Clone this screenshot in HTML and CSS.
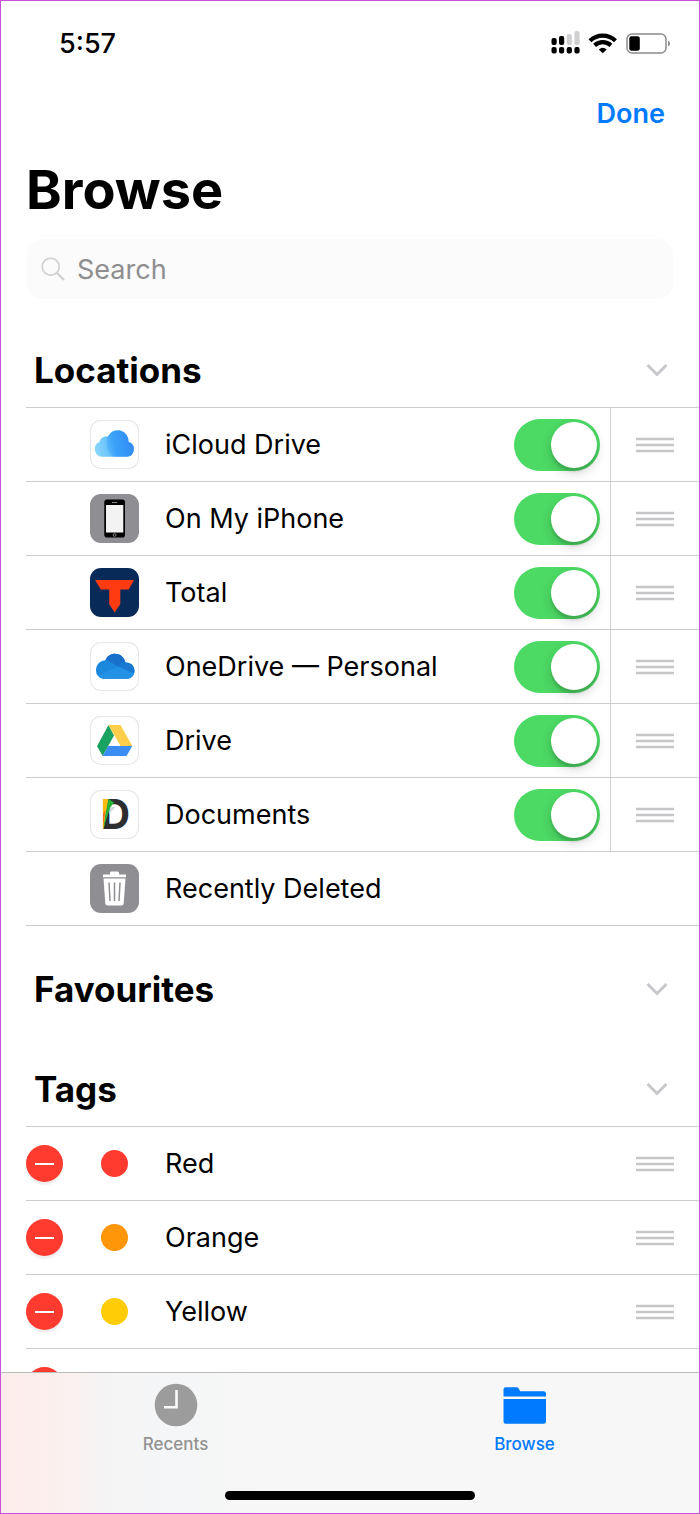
FILE: index.html
```html
<!DOCTYPE html>
<html lang="en">
<head>
<meta charset="utf-8">
<meta name="viewport" content="width=device-width, initial-scale=1">
<title>Browse</title>
<link rel="stylesheet" href="styles.css">
</head>
<body>
<svg class="defs" aria-hidden="true">
  <defs>
    <symbol id="chevron" viewBox="0 0 22 14"><path d="M1.5 2 11 11.5 20.5 2" fill="none" stroke="#c7c7cc" stroke-width="3"/></symbol>
    <symbol id="grip" viewBox="0 0 38 16"><path d="M0 2H38M0 8H38M0 14H38" stroke="#c6c6c8" stroke-width="2.4"/></symbol>
    <linearGradient id="sky" gradientUnits="userSpaceOnUse" x1="5" y1="30" x2="45" y2="22">
      <stop offset="0" stop-color="#8ad6fb"/><stop offset=".3" stop-color="#6cc6fb"/><stop offset=".5" stop-color="#42abfb"/><stop offset="1" stop-color="#3388f2"/>
    </linearGradient>
  </defs>
</svg>
<div class="screen">
  <main class="content">
    <header class="status">
      <time class="clock">5:57</time>
      <svg class="status-icons" viewBox="0 0 120 24" role="img" aria-label="Signal, Wi-Fi, battery">
        <g fill="#000">
          <rect x="1.5" y="16" width="5.2" height="6.4" rx="2"/><rect x="9" y="16" width="5.2" height="6.4" rx="2"/><rect x="16.7" y="16" width="5.2" height="6.4" rx="2"/><rect x="24.4" y="16" width="5.2" height="6.4" rx="2"/>
          <rect x="1.5" y="7" width="5.2" height="7" rx="2"/><rect x="9" y="5" width="5.2" height="9" rx="2"/>
        </g>
        <rect x="16.7" y="3" width="5.2" height="11" rx="2" fill="#d0d0d2"/><rect x="24.4" y="0" width="5.2" height="14" rx="2" fill="#d0d0d2"/>
        <g fill="none" stroke="#000" stroke-width="4.2"><path d="M40 9.800A18.500 18.500 0 0 1 65.500 9.800"/><path d="M44.600 14.400A12 12 0 0 1 60.900 14.400"/></g>
        <path d="M48.800 18.400Q52.750 15.300 56.700 18.400L52.750 22.300Z"/>
        <rect x="77" y="3" width="39" height="19" rx="5" fill="none" stroke="#8c8c8c" stroke-width="1.500"/>
        <rect x="79.300" y="5.200" width="10.500" height="14.600" rx="2.200"/>
        <path d="M118 9.500Q120 10.500 120 12.500T118 15.500Z" fill="#8c8c8c"/>
      </svg>
    </header>
    <nav class="actions"><button class="done" type="button">Done</button></nav>
    <h1 class="title">Browse</h1>
    <label class="search">
      <svg class="search-icon" viewBox="0 0 24 24" aria-hidden="true"><circle cx="9.700" cy="9.700" r="8.500" fill="none" stroke="#d0d0d2" stroke-width="1.700"/><path d="m16 16 7 7" stroke="#d0d0d2" stroke-width="2.400"/></svg>
      <input class="search-input" type="search" placeholder="Search" aria-label="Search">
    </label>

    <section class="group">
      <div class="group-head"><h2 class="group-title">Locations</h2><button class="fold" type="button" aria-label="Collapse Locations"><svg viewBox="0 0 22 14"><use href="#chevron"/></svg></button></div>
      <ul class="list">
        <li class="row">
          <svg class="app light" viewBox="0 0 49 49" aria-hidden="true"><g fill="url(#sky)"><path d="M12 36.700A7.800 7.800 0 0 1 9.500 21.800 6.800 6.800 0 0 1 17.800 16.600 10.900 10.900 0 0 1 38.600 21.800 7.700 7.700 0 0 1 37.500 36.700Z"/></g><path d="M17.800 16.600A10.900 10.900 0 0 1 38.600 21.800 7.700 7.700 0 0 1 37.500 36.700H24C17 32 15 24 17.800 16.600Z" fill="#2586f7" opacity=".25"/></svg>
          <label class="name" for="s1">iCloud Drive</label><input class="switch" id="s1" type="checkbox" role="switch" checked>
          <button class="handle" type="button" aria-label="Reorder iCloud Drive"><svg viewBox="0 0 38 16"><use href="#grip"/></svg></button>
        </li>
        <li class="row">
          <svg class="app grey" viewBox="0 0 49 49" aria-hidden="true"><rect x="14.300" y="5.500" width="20.700" height="38" rx="2.800"/><rect x="16" y="11" width="17.300" height="27.500" fill="#f3f3f3"/><path d="M22 8.500h5" stroke="#888" stroke-width="1"/><circle cx="24.600" cy="41" r="1.400" fill="none" stroke="#999" stroke-width=".8"/></svg>
          <label class="name" for="s2">On My iPhone</label><input class="switch" id="s2" type="checkbox" role="switch" checked>
          <button class="handle" type="button" aria-label="Reorder On My iPhone"><svg viewBox="0 0 38 16"><use href="#grip"/></svg></button>
        </li>
        <li class="row">
          <svg class="app navy" viewBox="0 0 49 49" aria-hidden="true"><path d="M5 12H44L38.700 21.500H30.300V36L24.700 44.500 19.200 36V21.500H10.800Z" fill="#ff3b12"/></svg>
          <label class="name" for="s3">Total</label><input class="switch" id="s3" type="checkbox" role="switch" checked>
          <button class="handle" type="button" aria-label="Reorder Total"><svg viewBox="0 0 38 16"><use href="#grip"/></svg></button>
        </li>
        <li class="row">
          <svg class="app light" viewBox="0 0 49 49" aria-hidden="true"><path d="M13.500 36.700A8 8 0 0 1 6 28.500C6 23 10 18.500 15.500 18.300 17 14 20.500 11.700 25 11.700 30 11.700 34 15 35.500 20.500 41 20.500 44.500 24 44.500 28.700 44.500 33.500 41 36.700 37 36.700Z" fill="#1b87dd"/><path d="M15.500 18.300C17 14 20.500 11.700 25 11.700 30 11.700 34 15 35.500 20.500 32 20.500 29.500 22 28 24.500L21 20.200Q18.500 18.500 15.500 18.300Z" fill="#1970ca"/><path d="M35.500 20.500C42 20.500 45.800 26 44 31.500L28 24.500C29.500 22 32 20.500 35.500 20.500Z" fill="#1878d2"/><path d="M8 33.500 28 24.500 44 31.500C42.700 35 40 36.700 37 36.700H13.500Q10 36.700 8 33.500Z" fill="#2391e5"/></svg>
          <label class="name" for="s4">OneDrive — Personal</label><input class="switch" id="s4" type="checkbox" role="switch" checked>
          <button class="handle" type="button" aria-label="Reorder OneDrive"><svg viewBox="0 0 38 16"><use href="#grip"/></svg></button>
        </li>
        <li class="row">
          <svg class="app light" viewBox="0 0 49 49" aria-hidden="true"><path d="M18.500 9 24 19.500 12.700 40 7 30.300Z" fill="#1aa260"/><path d="M18.500 9H30.500L42.300 30H30.500Z" fill="#ffce4b"/><path d="M18 30H42.300L36.500 40H12.700Z" fill="#3b8cf3"/></svg>
          <label class="name" for="s5">Drive</label><input class="switch" id="s5" type="checkbox" role="switch" checked>
          <button class="handle" type="button" aria-label="Reorder Drive"><svg viewBox="0 0 38 16"><use href="#grip"/></svg></button>
        </li>
        <li class="row">
          <svg class="app light" viewBox="0 0 49 49" aria-hidden="true"><text class="mark" x="10.500" y="38.500">D</text><path d="M13 9H18.500L13.800 38.500H13Z" fill="#fcb813"/><path d="M18.500 9 24 12.500 20 18 13.400 38.500 15.500 24Z" fill="#27b235"/><path d="M13 24 15.500 20 13.300 36Z" fill="#f36b21"/><path d="m20.500 17 5.500-.5-7 7.500Z" fill="#d8d8d8"/></svg>
          <label class="name" for="s6">Documents</label><input class="switch" id="s6" type="checkbox" role="switch" checked>
          <button class="handle" type="button" aria-label="Reorder Documents"><svg viewBox="0 0 38 16"><use href="#grip"/></svg></button>
        </li>
        <li class="row">
          <svg class="app grey" viewBox="0 0 49 49" aria-hidden="true"><path d="M13 10.500H20V9Q20 7.500 21.500 7.500H27.500Q29 7.500 29 9V10.500H36V13.300H13Z" fill="#fff"/><path d="M13.500 14.500H35.500L33.700 39.500Q33.500 41.500 31.500 41.500H17.500Q15.500 41.500 15.300 39.500Z" fill="#fff"/><path d="m19 18.500 1 18.500M24.500 18.500V37M30 18.500 29 37" stroke="#8e8e93" stroke-width="1.500"/></svg>
          <span class="name">Recently Deleted</span>
        </li>
      </ul>
    </section>

    <section class="group">
      <div class="group-head"><h2 class="group-title">Favourites</h2><button class="fold" type="button" aria-label="Expand Favourites"><svg viewBox="0 0 22 14"><use href="#chevron"/></svg></button></div>
    </section>

    <section class="group">
      <div class="group-head"><h2 class="group-title">Tags</h2><button class="fold" type="button" aria-label="Collapse Tags"><svg viewBox="0 0 22 14"><use href="#chevron"/></svg></button></div>
      <ul class="list">
        <li class="row"><button class="remove" type="button" aria-label="Remove Red"></button><span class="dot red"></span><span class="name">Red</span><button class="handle plain" type="button" aria-label="Reorder Red"><svg viewBox="0 0 38 16"><use href="#grip"/></svg></button></li>
        <li class="row"><button class="remove" type="button" aria-label="Remove Orange"></button><span class="dot orange"></span><span class="name">Orange</span><button class="handle plain" type="button" aria-label="Reorder Orange"><svg viewBox="0 0 38 16"><use href="#grip"/></svg></button></li>
        <li class="row"><button class="remove" type="button" aria-label="Remove Yellow"></button><span class="dot yellow"></span><span class="name">Yellow</span><button class="handle plain" type="button" aria-label="Reorder Yellow"><svg viewBox="0 0 38 16"><use href="#grip"/></svg></button></li>
        <li class="row"><button class="remove" type="button" aria-label="Remove tag"></button><span class="dot green"></span></li>
      </ul>
    </section>
  </main>

  <footer class="tabbar">
    <nav class="tabs">
      <a class="tab" href="#recents"><svg class="tab-icon" viewBox="0 0 44 44" aria-hidden="true"><circle cx="22" cy="22" r="21.300" fill="#9c9c9c"/><path d="M22.500 7V24.300H10" fill="none" stroke="#fafafa" stroke-width="2.600"/></svg>Recents</a>
      <a class="tab active" href="#browse" aria-current="page"><svg class="tab-icon" viewBox="0 0 44 44" aria-hidden="true"><path d="M.5 13.500V6.500Q.5 4.300 2.700 4.300H13.500Q15 4.300 15.800 5.700L17.200 8.300H40.500Q43 8.300 43 10.800V13.500ZM.5 16H43V38.500Q43 40.700 40.800 40.700H2.700Q.5 40.700 .5 38.500Z" fill="#007aff"/></svg>Browse</a>
    </nav>
    <div class="home"></div>
  </footer>
</div>
</body>
</html>
```
FILE: styles.css
```css
* { box-sizing: border-box; }

body {
  margin: 0;
  background: #fff;
  color: #000;
  font-family: Inter, "Liberation Sans", sans-serif;
  font-size: 27px;
}

button {
  padding: 0;
  border: 0;
  background: none;
  font: inherit;
  color: inherit;
}

svg { display: block; }

.defs {
  position: absolute;
  width: 0;
  height: 0;
}

.screen {
  display: flex;
  flex-direction: column;
  height: 100vh;
  border: 1px solid #c94fdd;
}

.content {
  flex: 1;
  min-height: 0;
  overflow-y: auto;
  scrollbar-width: none;
}

.status {
  display: flex;
  align-items: center;
  justify-content: space-between;
  height: 84px;
  padding: 0 29px 0 58px;
}

.clock {
  font-size: 27px;
  font-weight: 500;
}

.status-icons {
  width: 120px;
  height: 24px;
}

.actions {
  display: flex;
  justify-content: flex-end;
  height: 56px;
  padding-right: 34px;
}

.done {
  color: #007aff;
  font-weight: 600;
}

.title {
  margin: 0;
  padding-left: 25px;
  font-size: 54px;
  font-weight: 700;
  line-height: 98px;
}

.search {
  display: flex;
  align-items: center;
  gap: 12px;
  height: 60px;
  margin: 0 26px 33px;
  padding: 0 14px;
  border-radius: 16px;
  background: #fbfbfb;
}

.search-icon {
  flex: none;
  width: 24px;
  height: 24px;
}

.search-input {
  flex: 1;
  min-width: 0;
  padding: 0;
  border: 0;
  outline: 0;
  background: none;
  font: inherit;
}

.search-input::placeholder { color: #8e8e90; }

.group + .group { margin-top: 25px; }

.group-head {
  display: flex;
  align-items: center;
  justify-content: space-between;
  height: 75px;
  padding: 0 31px 0 33px;
}

.group-title {
  margin: 0;
  font-size: 35px;
  font-weight: 700;
}

.fold svg {
  width: 22px;
  height: 14px;
}

.list {
  margin: 0 0 0 25px;
  padding: 0;
  border-top: 1px solid #cdcdcf;
  list-style: none;
}

.row {
  display: grid;
  grid-template-columns: 64px 49px 1fr auto 89px;
  align-items: center;
  height: 74px;
  border-bottom: 1px solid #cdcdcf;
}

.app {
  grid-column: 2;
  width: 49px;
  height: 49px;
  border-radius: 11px;
}

.light { box-shadow: inset 0 0 0 1px #e6e6e6; }
.grey { background: #8e8e93; }
.navy { background: #082a58; }

.mark {
  font-size: 41px;
  font-weight: 700;
  fill: #2e2e30;
}

.name {
  grid-column: 3;
  padding-left: 26px;
  white-space: nowrap;
}

.switch {
  display: flex;
  align-items: center;
  justify-content: flex-end;
  width: 86px;
  height: 52px;
  margin: 0 10px 0 0;
  padding: 3px;
  border-radius: 26px;
  background: #d8d8da;
  appearance: none;
}

.switch:checked { background: #4cd964; }

.switch::before {
  content: "";
  width: 46px;
  height: 46px;
  border-radius: 50%;
  background: #fff;
  box-shadow: 0 5px 12px rgb(0 0 0 / 16%), 0 4px 2px rgb(0 0 0 / 10%);
}

.switch:not(:checked) { justify-content: flex-start; }

.handle {
  display: grid;
  grid-column: 5;
  place-items: center;
  align-self: stretch;
  border-left: 1px solid #d0d0d0;
}

.handle svg {
  width: 38px;
  height: 16px;
}

.plain { border-left-color: transparent; }

.remove {
  display: grid;
  place-items: center;
  width: 37px;
  height: 37px;
  border-radius: 50%;
  background: #ff3b30;
  box-shadow: 0 3px 2px rgb(0 0 0 / 7%);
}

.remove::before {
  content: "";
  width: 19px;
  height: 2px;
  background: #fff;
}

.dot {
  justify-self: center;
  width: 27px;
  height: 27px;
  border-radius: 50%;
}

.red { background: #ff3b30; }
.orange { background: #ff9508; }
.yellow { background: #ffcc05; }
.green { background: #35d058; }

.tabbar {
  display: flex;
  flex-direction: column;
  align-items: center;
  justify-content: space-between;
  height: 141px;
  padding: 10px 0 13px;
  border-top: 1px solid #bbb;
  background: linear-gradient(90deg, #fdecea 0, #fbefed 50px, #f5f5f6 110px, #f5f6f7 180px, #f7f7f7 260px);
}

.tabs {
  display: flex;
  width: 100%;
}

.tab {
  display: flex;
  flex: 1;
  flex-direction: column;
  align-items: center;
  gap: 7px;
  color: #929292;
  font-size: 17px;
  font-weight: 500;
  line-height: 20px;
  text-decoration: none;
}

.tab-icon {
  width: 44px;
  height: 44px;
}

.active { color: #007aff; }

.home {
  width: 250px;
  height: 9px;
  border-radius: 5px;
  background: #000;
}
```
